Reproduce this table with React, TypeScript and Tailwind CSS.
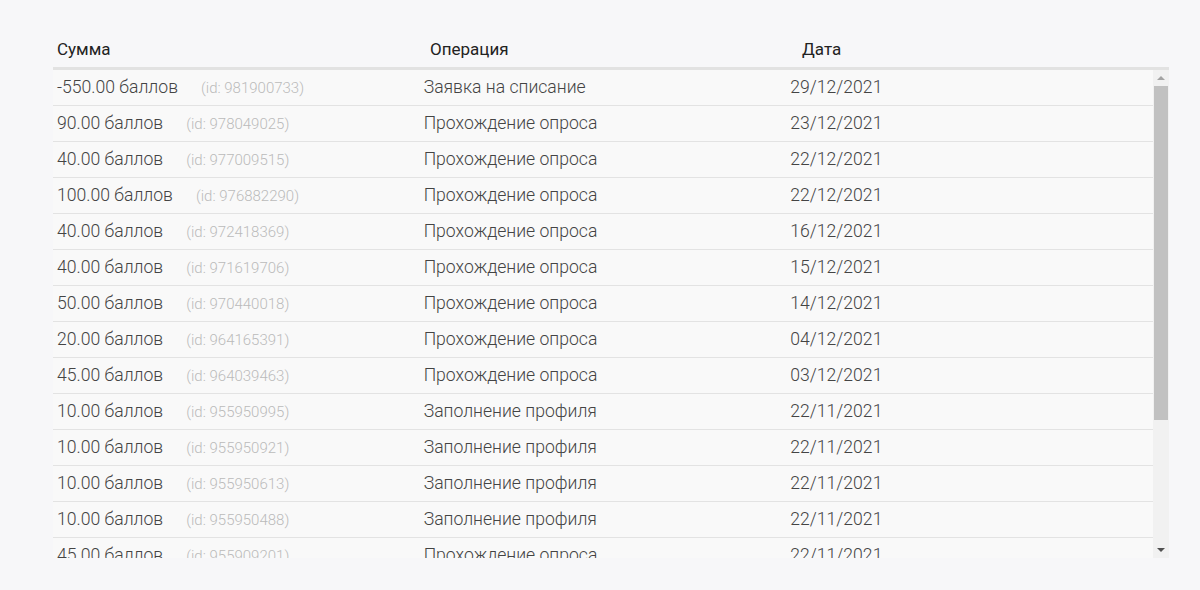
import React from "react";

const rows: [string, string, string, string][] = [
  ["-550.00 баллов", "981900733", "Заявка на списание", "29/12/2021"],
  ["90.00 баллов", "978049025", "Прохождение опроса", "23/12/2021"],
  ["40.00 баллов", "977009515", "Прохождение опроса", "22/12/2021"],
  ["100.00 баллов", "976882290", "Прохождение опроса", "22/12/2021"],
  ["40.00 баллов", "972418369", "Прохождение опроса", "16/12/2021"],
  ["40.00 баллов", "971619706", "Прохождение опроса", "15/12/2021"],
  ["50.00 баллов", "970440018", "Прохождение опроса", "14/12/2021"],
  ["20.00 баллов", "964165391", "Прохождение опроса", "04/12/2021"],
  ["45.00 баллов", "964039463", "Прохождение опроса", "03/12/2021"],
  ["10.00 баллов", "955950995", "Заполнение профиля", "22/11/2021"],
  ["10.00 баллов", "955950921", "Заполнение профиля", "22/11/2021"],
  ["10.00 баллов", "955950613", "Заполнение профиля", "22/11/2021"],
  ["10.00 баллов", "955950488", "Заполнение профиля", "22/11/2021"],
  ["45.00 баллов", "955909201", "Прохождение опроса", "22/11/2021"],
  ["10.00 баллов", "955909100", "Заполнение профиля", "22/11/2021"],
];

export default function App() {
  return (
    <div
      className="w-[1200px] h-[590px] bg-[#f7f7f9] pt-[32px] pl-[53px] overflow-hidden"
      style={{ fontFamily: "Roboto, 'Noto Sans', sans-serif" }}
    >
      <div className="w-[1116px]">
        <div className="grid grid-cols-3 h-[38px] items-center border-b-[3px] border-[#e2e2e2] text-[17px] text-[#222]">
          <div className="pl-[4px]">Сумма</div>
          <div className="pl-[5px]">Операция</div>
          <div className="pl-[5px]">Дата</div>
        </div>
        <div className="flex h-[488px]">
          <div className="flex-1 overflow-hidden bg-[#f9f9f9]">
            {rows.map((r, i) => (
              <div
                key={i}
                className="grid grid-cols-3 h-[36px] items-center border-b border-[#e3e3e3] text-[17.6px] font-light text-[#444]"
              >
                <div className="pl-[4px] whitespace-nowrap">
                  {r[0]}
                  <span className="ml-[23px] text-[15px] text-[#bbb]">(id: {r[1]})</span>
                </div>
                <div className="pl-[4px]">{r[2]}</div>
                <div className="pl-[4px]">{r[3]}</div>
              </div>
            ))}
          </div>
          <div className="w-[16px] bg-[#f1f1f1] flex flex-col items-center">
            <div className="h-[16px] flex items-center justify-center">
              <div className="w-0 h-0 border-l-[4px] border-r-[4px] border-b-[4px] border-l-transparent border-r-transparent border-b-[#a3a3a3]" />
            </div>
            <div className="w-[14px] h-[334px] bg-[#c1c1c1]" />
            <div className="flex-1" />
            <div className="h-[16px] flex items-center justify-center">
              <div className="w-0 h-0 border-l-[4px] border-r-[4px] border-t-[4px] border-l-transparent border-r-transparent border-t-[#505050]" />
            </div>
          </div>
        </div>
      </div>
    </div>
  );
}
